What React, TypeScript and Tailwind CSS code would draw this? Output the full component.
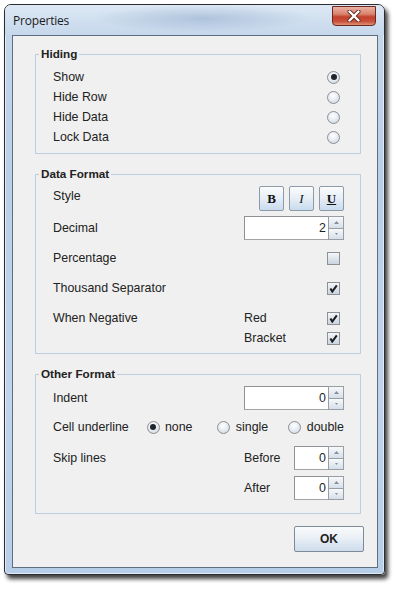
import React from "react";

const SANS = "font-['Liberation_Sans',Arial,sans-serif]";

function Radio({ checked }: { checked?: boolean }) {
  return (
    <span className="w-[13px] h-[13px] rounded-full border border-[#8c8e90] bg-[radial-gradient(circle_at_45%_35%,#ffffff_0%,#e9eef4_45%,#c3cfdc_100%)] flex items-center justify-center shrink-0">
      {checked && <span className="w-[6px] h-[6px] rounded-full bg-[#202428]" />}
    </span>
  );
}

function Check({ checked }: { checked?: boolean }) {
  return (
    <span className="w-[13px] h-[13px] border border-[#8e9092] bg-[linear-gradient(180deg,#f4f6f8_0%,#dde4ec_55%,#c9d4e1_100%)] flex items-center justify-center shrink-0">
      {checked && (
        <svg width="9" height="9" viewBox="0 0 9 9">
          <path d="M1.4 4.4 L3.3 7.6 L7.8 1.4" stroke="#1b1d20" strokeWidth="2" fill="none" strokeLinejoin="miter" />
        </svg>
      )}
    </span>
  );
}

function SpinButtons() {
  return (
    <div className="w-[16px] flex flex-col">
      <div className="flex-1 border border-[#9a9ea3] bg-[linear-gradient(180deg,#f7f9fb,#d5dfea)] flex items-center justify-center">
        <svg width="5" height="3" viewBox="0 0 5 3">
          <path d="M0 3 L2.5 0 L5 3 Z" fill="#8a8f95" />
        </svg>
      </div>
      <div className="flex-1 border border-t-0 border-[#9a9ea3] bg-[linear-gradient(180deg,#f7f9fb,#d5dfea)] flex items-center justify-center">
        <svg width="3" height="2" viewBox="0 0 3 2">
          <path d="M0 0 L1.5 2 L3 0 Z" fill="#8a8f95" />
        </svg>
      </div>
    </div>
  );
}

function Spinner({ value, wide }: { value: string; wide?: boolean }) {
  return (
    <div className={wide ? "flex h-[24px] w-[100px]" : "flex h-[24px] w-[50px]"}>
      <div className="flex-1 bg-white border border-[#a3a6a9] border-t-[#8e9195] border-l-[#8e9195] border-r-0 flex items-center justify-end pr-[2px] text-[12.4px] text-[#1f1f1f]">
        {value}
      </div>
      <SpinButtons />
    </div>
  );
}

function Group({ title, children, className }: { title: string; children: React.ReactNode; className: string }) {
  return (
    <div className={"relative border border-[#bccde0] " + className}>
      <span className="absolute top-[-8px] left-[3px] px-[2px] bg-[#f0f0f0] font-bold text-[11.7px] leading-[14px] text-[#222]">
        {title}
      </span>
      {children}
    </div>
  );
}

function StyleBtn({ children }: { children: React.ReactNode }) {
  return (
    <div className="w-[25px] h-[25px] border border-[#8d9aa8] rounded-[2px] bg-[linear-gradient(180deg,#fbfcfd_0%,#e8eff7_45%,#c9dbee_100%)] flex items-center justify-center font-['Liberation_Serif',serif] text-[13px] text-[#111]">
      {children}
    </div>
  );
}

export default function App() {
  return (
    <div className={"w-[397px] h-[592px] bg-white pt-[4px] pl-[4px] " + SANS}>
      <div className="w-[381px] h-[571px] flex flex-col border border-[#2a2e33] rounded-t-[7px] rounded-b-[4px] bg-[linear-gradient(180deg,#d6e3f1_0%,#c3d6eb_5%,#b9cfe8_30%,#c0d5ec_70%,#b7cee8_100%)] shadow-[3px_4px_4px_rgba(0,0,0,0.75),inset_0_0_0_1px_rgba(255,255,255,0.55)]">
        {/* title bar */}
        <div className="h-[30px] flex items-start justify-between pl-[8px] pr-[8px] bg-[radial-gradient(ellipse_110px_14px_at_52%_45%,rgba(130,160,195,0.45),rgba(130,160,195,0)),linear-gradient(180deg,#dde8f4_0%,#cfdeef_60%,#c6d8ec_100%)] rounded-t-[6px]">
          <span className="mt-[9px] text-[12px] leading-[14px] text-[#1a1a1a] font-['Open_Sans',sans-serif] tracking-[-0.2px]">
            Properties
          </span>
          <div className="mt-[1px] w-[44px] h-[20px] rounded-b-[4px] border border-[#6a2a20] bg-[linear-gradient(180deg,#eab1a3_0%,#d8826c_40%,#c2402a_55%,#c9503a_80%,#e08f76_100%)] flex items-center justify-center">
            <svg width="14" height="12" viewBox="0 0 14 12">
              <path d="M2.5 1.5 L11.5 10.5 M11.5 1.5 L2.5 10.5" stroke="#5a2a22" strokeWidth="4" strokeLinecap="round" />
              <path d="M2.5 1.5 L11.5 10.5 M11.5 1.5 L2.5 10.5" stroke="#ffffff" strokeWidth="2.4" strokeLinecap="round" />
            </svg>
          </div>
        </div>
        {/* client */}
        <div className="ml-[7px] mr-[6px] h-[533px] border border-[#5f6f80] bg-[#f0f0f0] flex flex-col text-[12.4px] text-[#222]">
          <div className="pl-[22px] pr-[16px] flex flex-col">
            <Group title="Hiding" className="mt-[18px] pt-[12px] pb-[6px] pl-[17px] pr-[16px]">
              {["Show", "Hide Row", "Hide Data", "Lock Data"].map((t, i) => (
                <div key={t} className="h-[20px] flex items-center justify-between">
                  <span>{t}</span>
                  <span className="mr-[4px]">
                    <Radio checked={i === 0} />
                  </span>
                </div>
              ))}
            </Group>

            <Group title="Data Format" className="mt-[20px] pt-[11px] pb-[5px] pl-[17px] pr-[16px]">
              <div className="h-[25px] flex items-center justify-between">
                <span className="mb-[4px]">Style</span>
                <div className="flex gap-[5px]">
                  <StyleBtn>
                    <span className="font-bold">B</span>
                  </StyleBtn>
                  <StyleBtn>
                    <span className="italic">I</span>
                  </StyleBtn>
                  <StyleBtn>
                    <span className="font-bold underline">U</span>
                  </StyleBtn>
                </div>
              </div>
              <div className="mt-[5px] h-[24px] flex items-center justify-between">
                <span>Decimal</span>
                <Spinner value="2" wide />
              </div>
              <div className="mt-[3px] h-[30px] flex items-center justify-between">
                <span>Percentage</span>
                <span className="mr-[4px]">
                  <Check />
                </span>
              </div>
              <div className="h-[30px] flex items-center justify-between">
                <span>Thousand Separator</span>
                <span className="mr-[4px]">
                  <Check checked />
                </span>
              </div>
              <div className="pt-[5px] flex justify-between">
                <div className="h-[20px] flex items-center">When Negative</div>
                <div className="w-[100px] flex flex-col">
                  <div className="h-[20px] flex items-center justify-between">
                    <span>Red</span>
                    <span className="mr-[4px]">
                      <Check checked />
                    </span>
                  </div>
                  <div className="h-[20px] flex items-center justify-between">
                    <span>Bracket</span>
                    <span className="mr-[4px]">
                      <Check checked />
                    </span>
                  </div>
                </div>
              </div>
            </Group>

            <Group title="Other Format" className="mt-[20px] pt-[11px] pb-[13px] pl-[17px] pr-[16px]">
              <div className="h-[24px] flex items-center justify-between">
                <span>Indent</span>
                <Spinner value="0" wide />
              </div>
              <div className="mt-[2px] h-[30px] flex items-center">
                <span className="w-[94px]">Cell underline</span>
                <Radio checked />
                <span className="ml-[5px] w-[52px]">none</span>
                <Radio />
                <span className="ml-[6px] w-[52px]">single</span>
                <Radio />
                <span className="ml-[6px]">double</span>
              </div>
              <div className="mt-[4px] flex justify-between">
                <div className="h-[24px] flex items-center">Skip lines</div>
                <div className="w-[100px] flex flex-col gap-[6px]">
                  <div className="h-[24px] flex items-center justify-between">
                    <span>Before</span>
                    <Spinner value="0" />
                  </div>
                  <div className="h-[24px] flex items-center justify-between">
                    <span>After</span>
                    <Spinner value="0" />
                  </div>
                </div>
              </div>
            </Group>
          </div>
          <div className="mt-[12px] pr-[13px] flex justify-end">
            <div className="w-[70px] h-[26px] border border-[#7d8a98] rounded-[2px] bg-[linear-gradient(180deg,#fafbfc_0%,#eaf0f6_45%,#cddcec_100%)] flex items-center justify-center font-bold text-[12px] text-[#222]">
              OK
            </div>
          </div>
        </div>
      </div>
    </div>
  );
}
